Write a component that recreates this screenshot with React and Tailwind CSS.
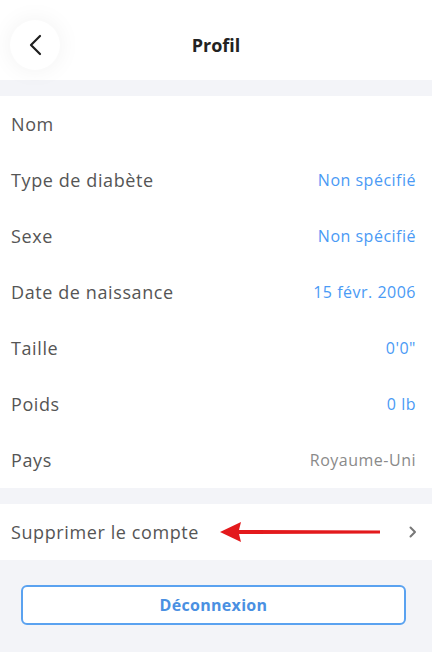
import React from 'react';

const rows = [
  { label: 'Nom', value: '' },
  { label: 'Type de diabète', value: 'Non spécifié', tone: 'blue' },
  { label: 'Sexe', value: 'Non spécifié', tone: 'blue' },
  { label: 'Date de naissance', value: '15 févr. 2006', tone: 'blue' },
  { label: 'Taille', value: '0\'0"', tone: 'blue' },
  { label: 'Poids', value: '0 lb', tone: 'blue' },
  { label: 'Pays', value: 'Royaume-Uni', tone: 'grey' },
];

const ProfileRow = ({ label, value, tone }) => (
  <div className="flex items-center justify-between h-14 pl-[11px] pr-4">
    <span className="text-[18px] tracking-[0.6px] text-[#555555]">{label}</span>
    {value && (
      <span
        className={
          tone === 'blue'
            ? 'text-[16px] tracking-[0.5px] text-[#4a9af5]'
            : 'text-[16px] tracking-[0.5px] text-[#8a8a8a]'
        }
      >
        {value}
      </span>
    )}
  </div>
);

const App = () => (
  <div className="w-[432px] h-[652px] bg-[#f3f4f8] font-['Open_Sans',sans-serif] overflow-hidden">
    {/* Header */}
    <div className="relative flex items-center justify-center h-20 pt-[10px] bg-white">
      <button className="absolute left-[10px] top-5 flex items-center justify-center w-[50px] h-[50px] rounded-full bg-white shadow-[0_0_24px_rgba(0,0,0,0.06)]">
        <svg width="16" height="22" viewBox="0 0 16 22" fill="none">
          <path d="M13 2 L4 11 L13 20" stroke="#1f1f1f" strokeWidth="2.2" strokeLinecap="round" strokeLinejoin="round" />
        </svg>
      </button>
      <h1 className="text-[18px] font-bold text-[#222222]">Profil</h1>
    </div>

    {/* Profile details */}
    <div className="mt-4 bg-white">
      {rows.map((row) => (
        <ProfileRow key={row.label} {...row} />
      ))}
    </div>

    {/* Delete account */}
    <div className="relative flex items-center justify-between h-14 mt-4 pl-[11px] pr-[15px] bg-white">
      <span className="text-[18px] tracking-[0.6px] text-[#555555]">Supprimer le compte</span>
      <svg width="8" height="12" viewBox="0 0 8 12" fill="none">
        <path d="M1.5 1.5 L6 6 L1.5 10.5" stroke="#777777" strokeWidth="2" strokeLinecap="round" strokeLinejoin="round" />
      </svg>
      {/* annotation arrow */}
      <svg className="absolute left-[220px] top-[18px]" width="162" height="20" viewBox="0 0 162 20">
        <polygon points="0,10 21,0 19,8 160,8.5 160,11.5 19,12 21,20" fill="#e3191c" />
      </svg>
    </div>

    {/* Logout */}
    <div className="pl-[21px] pr-[26px] pt-[25px]">
      <button className="w-full h-10 rounded-md border-2 border-[#5aa2f0] bg-white text-[16px] font-bold tracking-[0.3px] text-[#4a90e2]">
        Déconnexion
      </button>
    </div>
  </div>
);

export default App;
